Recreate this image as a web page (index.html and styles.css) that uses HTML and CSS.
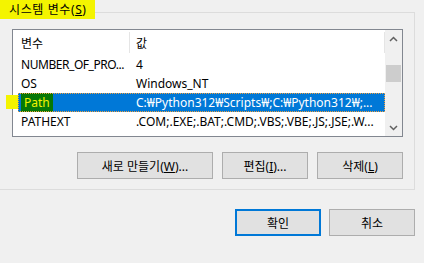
FILE: index.html
```html
<!DOCTYPE html>
<html lang="ko">
<head>
  <meta charset="UTF-8" />
  <title>시스템 변수</title>
  <link rel="stylesheet" href="styles.css">
</head>
<body>

  <!-- System variables group -->
  <div class="group">
    <div class="group-title"><span class="marker">시스템 변수(<u>S</u>)</span></div>

    <div class="listbox">
      <div class="list-main">
        <div class="list-header">
          <div class="hcell hcell-name">변수</div>
          <div class="hcell hcell-value">값</div>
        </div>

        <div class="row">
          <div class="cell tight">NUMBER_OF_PRO...</div>
          <div class="cell cell-value">4</div>
        </div>
        <div class="row">
          <div class="cell">OS</div>
          <div class="cell cell-value">Windows_NT</div>
        </div>
        <div class="row selected">
          <span class="row-mark"></span>
          <div class="cell"><span class="name-mark">Path</span></div>
          <div class="cell cell-value">C:₩Python312₩Scripts₩;C:₩Python312₩;...</div>
        </div>
        <div class="row">
          <div class="cell">PATHEXT</div>
          <div class="cell cell-value">.COM;.EXE;.BAT;.CMD;.VBS;.VBE;.JS;.JSE;.W...</div>
        </div>
      </div>

      <div class="scrollbar">
        <div class="scroll-btn">
          <svg width="9" height="6" viewBox="0 0 9 6"><path d="M1 5 L4.5 1.5 L8 5" fill="none" stroke="#606060" stroke-width="1.5"/></svg>
        </div>
        <div class="scroll-track"><div class="scroll-thumb"></div></div>
        <div class="scroll-btn">
          <svg width="9" height="6" viewBox="0 0 9 6"><path d="M1 1 L4.5 4.5 L8 1" fill="none" stroke="#606060" stroke-width="1.5"/></svg>
        </div>
      </div>
    </div>

    <div class="actions">
      <button class="btn btn-new">새로 만들기(<u>W</u>)...</button>
      <button class="btn">편집(<u>I</u>)...</button>
      <button class="btn">삭제(<u>L</u>)</button>
    </div>
  </div>

  <!-- OK / Cancel -->
  <div class="dialog-buttons">
    <button class="btn btn-default">확인</button>
    <button class="btn">취소</button>
  </div>

</body>
</html>
```

FILE: styles.css
```css
body {
  margin: 0;
  background-color: #f0f0f0;
  font-family: "Noto Sans", "Noto Sans CJK KR", sans-serif;
  font-size: 12px;
  color: #000;
}

/* group box */
.group {
  width: 391px;
  margin-top: 12px;
  padding: 0 11px 10px 12px;
  border-top: 1px solid #dcdcdc;
  border-right: 1px solid #dcdcdc;
  border-bottom: 1px solid #dcdcdc;
}

.group-title {
  margin: -13px 0 0 -12px;
  height: 19px;
  line-height: 19px;
}

.marker {
  display: inline-block;
  height: 19px;
  padding: 0 8px 0 9px;
  letter-spacing: 0.6px;
  background-color: #f4f400;
}

/* list view */
.listbox {
  display: flex;
  margin-top: 10px;
  height: 108px;
  box-sizing: border-box;
  border: 1px solid #828790;
  background: #fff;
}

.list-main {
  flex: 1;
}

.list-header {
  display: flex;
  height: 25px;
}

.hcell {
  display: flex;
  align-items: center;
  box-sizing: border-box;
  background: linear-gradient(#e5e5e5, #e5e5e5) right 2px / 1px 21px no-repeat;
}

.hcell-name {
  width: 117px;
  padding-left: 8px;
}

.hcell-value {
  flex: 1;
  padding-left: 6px;
}

.row {
  position: relative;
  display: grid;
  grid-template-columns: 111px 1fr;
  height: 19px;
  line-height: 19px;
  margin-left: 5px;
  white-space: nowrap;
}

.cell {
  overflow: hidden;
  padding-left: 3px;
}

.tight {
  letter-spacing: -0.45px;
}

.cell-value {
  padding-left: 7px;
}

.selected {
  background-color: #0078d7;
  color: #fff;
  outline: 1px dotted #f0a040;
  outline-offset: -1px;
}

.selected .cell:first-child {
  padding-left: 0;
}

.name-mark {
  display: inline-block;
  height: 19px;
  padding: 0 3px;
  background-color: #067806;
  color: #f4f400;
}

.row-mark {
  position: absolute;
  left: -12px;
  top: 2px;
  width: 12px;
  height: 14px;
  background-color: #f4f400;
}

/* scrollbar */
.scrollbar {
  display: flex;
  flex-direction: column;
  width: 17px;
  background-color: #f0f0f0;
}

.scroll-btn {
  height: 17px;
  display: flex;
  align-items: center;
  justify-content: center;
}

.scroll-track {
  flex: 1;
}

.scroll-thumb {
  margin: 18px 1px 0;
  height: 17px;
  background-color: #cdcdcd;
}

/* buttons */
.actions {
  display: flex;
  justify-content: flex-end;
  gap: 9px;
  margin-top: 15px;
}

.btn {
  width: 86px;
  height: 27px;
  padding: 0;
  border: 1px solid #adadad;
  background-color: #e1e1e1;
  font-family: inherit;
  font-size: 12px;
  color: #000;
}

.btn-new {
  width: 136px;
}

.dialog-buttons {
  display: flex;
  justify-content: flex-end;
  gap: 8px;
  width: 415px;
  margin-top: 19px;
}

.btn-default {
  border: 2px solid #0078d7;
}
```
